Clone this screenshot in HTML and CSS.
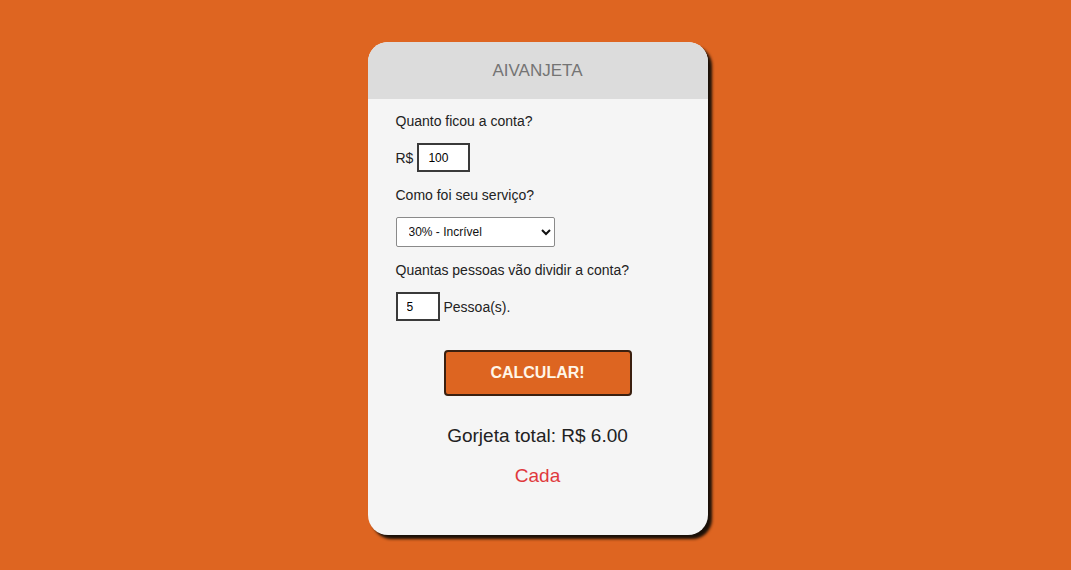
FILE: index.html
```html
<!DOCTYPE html>
<html lang="pt">
<head>
<meta charset="utf-8">
<link rel="stylesheet" href="styles.css">
<title>Aivanjeta</title>
</head>
<body>
<div class="card">
  <div class="card-header">AIVANJETA</div>
  <div class="card-body">
    <p class="label">Quanto ficou a conta?</p>
    <div class="row"><span>R$</span><input class="input bill" type="text" value="100"></div>
    <p class="label">Como foi seu serviço?</p>
    <div class="row">
      <select class="select">
        <option>30% - Incrível</option>
      </select>
    </div>
    <p class="label">Quantas pessoas vão dividir a conta?</p>
    <div class="row"><input class="input people" type="text" value="5"><span>Pessoa(s).</span></div>
    <div class="actions"><button class="btn">CALCULAR!</button></div>
    <p class="total">Gorjeta total: R$ 6.00</p>
    <p class="each">Cada</p>
  </div>
</div>
</body>
</html>
```

FILE: styles.css
```css
html, body {
  margin: 0;
  padding: 0;
}
body {
  background: #de6521;
  font-family: "Liberation Sans", Arial, sans-serif;
  color: #222;
  display: flex;
  justify-content: center;
  padding-top: 42px;
  padding-left: 4px;
  height: 570px;
  box-sizing: border-box;
}
.card {
  width: 340px;
  height: 493px;
  background: #f5f5f5;
  border-radius: 20px;
  box-shadow: 4px 4px 3px #1a1008;
  overflow: hidden;
  display: flex;
  flex-direction: column;
}
.card-header {
  height: 57px;
  background: #dcdcdc;
  color: #747474;
  font-size: 17px;
  display: flex;
  align-items: center;
  justify-content: center;
  padding-top: 1px;
  box-sizing: border-box;
}
.card-body {
  padding: 14px 28px 0 28px;
  display: flex;
  flex-direction: column;
}
.label {
  margin: 0;
  font-size: 14px;
  line-height: 16px;
}
.row {
  display: flex;
  align-items: center;
  gap: 4px;
  font-size: 14px;
  margin: 14px 0 15px 0;
}
.input {
  height: 29px;
  box-sizing: border-box;
  border: 2px solid #3a3a3a;
  background: #fff;
  font-family: "Liberation Sans", Arial, sans-serif;
  font-size: 12px;
  padding: 0 9px;
  outline: none;
  margin: 0;
}
.bill {
  width: 53px;
}
.people {
  width: 44px;
}
.select {
  width: 159px;
  height: 30px;
  box-sizing: border-box;
  border: 1px solid #8a8a8a;
  border-radius: 2px;
  background: #fff;
  font-family: "Liberation Sans", Arial, sans-serif;
  font-size: 12px;
  padding: 0 8px;
  color: #111;
}
.actions {
  display: flex;
  justify-content: center;
  margin-top: 14px;
}
.btn {
  width: 188px;
  height: 46px;
  background: #dd6521;
  border: 2px solid #3a2010;
  border-radius: 4px;
  color: #fff6e8;
  font-family: "Liberation Sans", Arial, sans-serif;
  font-weight: bold;
  font-size: 16px;
  cursor: pointer;
}
.total {
  margin: 28px 0 0 0;
  text-align: center;
  font-size: 19px;
  line-height: 24px;
  color: #222;
}
.each {
  margin: 16px 0 0 0;
  text-align: center;
  font-size: 19px;
  line-height: 24px;
  color: #e0393d;
}
```
